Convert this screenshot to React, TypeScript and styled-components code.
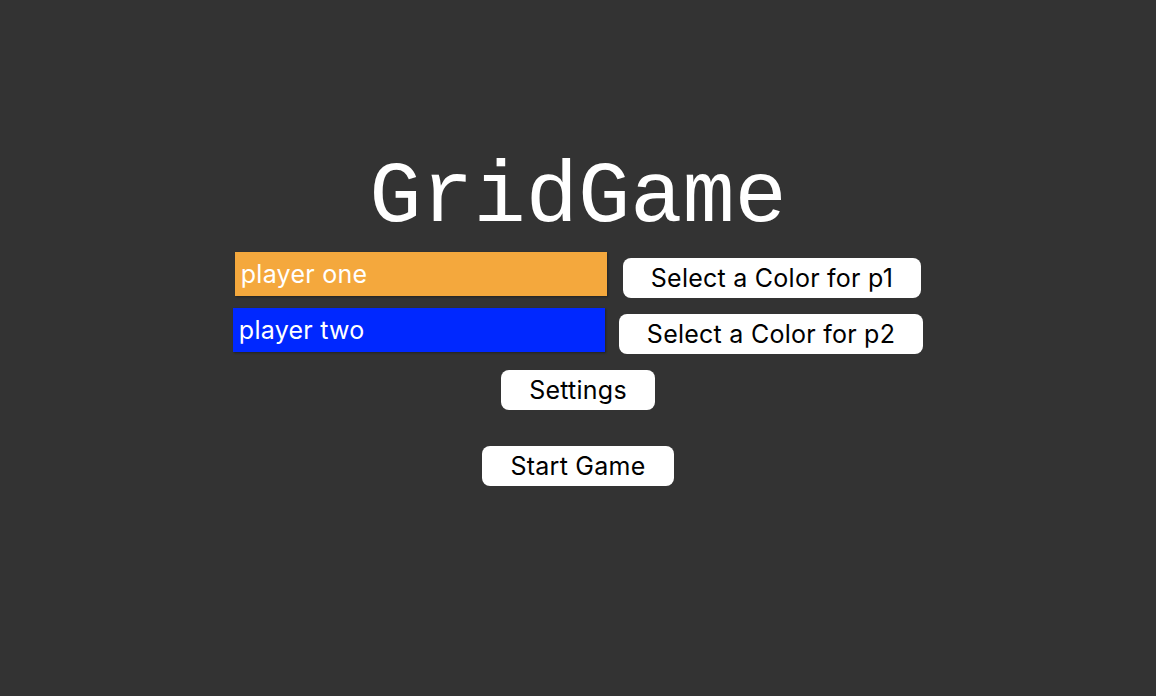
import React from "react";
import styled, { createGlobalStyle } from "styled-components";

const Global = createGlobalStyle`
  html, body { margin: 0; padding: 0; background: #333333; }
  body { font-family: Inter, "Noto Sans", sans-serif; }
`;

const Page = styled.main`
  min-height: 696px;
  display: flex;
  flex-direction: column;
  align-items: center;
  padding-top: 152px;
  box-sizing: border-box;
`;

const Title = styled.h1`
  margin: 0 0 8px;
  font-family: "Liberation Mono", "Courier New", monospace;
  font-weight: normal;
  font-size: 87px;
  line-height: 92px;
  color: #ffffff;
  letter-spacing: 0;
`;

const Row = styled.div<{ $gap: number }>`
  display: flex;
  align-items: flex-start;
  gap: ${(p) => p.$gap}px;
  margin-bottom: 10px;
`;

const NameInput = styled.input<{ $bg: string }>`
  width: 372px;
  height: 44px;
  box-sizing: border-box;
  border: none;
  outline: none;
  padding: 0 6px;
  background: ${(p) => p.$bg};
  color: #ffffff;
  font-family: Inter, "Noto Sans", sans-serif;
  font-size: 25px;
  font-weight: 420;
  letter-spacing: 0.25px;
  box-shadow: 1px 1px 2px rgba(0, 0, 0, 0.35);
`;

const Button = styled.button`
  height: 40px;
  box-sizing: border-box;
  padding: 0 28px;
  border: none;
  border-radius: 8px;
  background: #ffffff;
  color: #000000;
  font-family: Inter, "Noto Sans", sans-serif;
  font-size: 25px;
  font-weight: 420;
  letter-spacing: 0.25px;
  line-height: 40px;
  cursor: pointer;
`;

const ColorButton = styled(Button)`
  margin-top: 6px;
`;

const SettingsButton = styled(Button)`
  margin-top: 6px;
`;

const StartButton = styled(Button)`
  margin-top: 36px;
`;

export default function App() {
  return (
    <>
      <Global />
      <Page>
        <Title>GridGame</Title>
        <Row $gap={16}>
          <NameInput $bg="#f4a83d" defaultValue="player one" />
          <ColorButton>Select a Color for p1</ColorButton>
        </Row>
        <Row $gap={14}>
          <NameInput $bg="#0028ff" defaultValue="player two" />
          <ColorButton>Select a Color for p2</ColorButton>
        </Row>
        <SettingsButton>Settings</SettingsButton>
        <StartButton>Start Game</StartButton>
      </Page>
    </>
  );
}
